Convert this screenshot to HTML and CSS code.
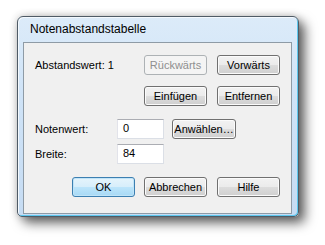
FILE: index.html
```html
<!DOCTYPE html>
<html>
<head>
<meta charset="utf-8">
<link rel="stylesheet" href="styles.css">
</head>
<body>
<div class="window">
  <div class="titlebar">Notenabstandstabelle</div>
  <div class="client">
    <div class="row r1">
      <span class="label lab-wide">Abstandswert: 1</span>
      <button class="btn" disabled>Rückwärts</button>
      <button class="btn gap10">Vorwärts</button>
    </div>
    <div class="row r2">
      <button class="btn">Einfügen</button>
      <button class="btn gap10">Entfernen</button>
    </div>
    <div class="row r3">
      <span class="label lab-narrow">Notenwert:</span>
      <span class="input">0</span>
      <button class="btn btn-sel">Anwählen…</button>
    </div>
    <div class="row r4">
      <span class="label lab-narrow">Breite:</span>
      <span class="input">84</span>
    </div>
    <div class="row r5">
      <button class="btn btn-default">OK</button>
      <button class="btn gap9">Abbrechen</button>
      <button class="btn gap10">Hilfe</button>
    </div>
  </div>
</div>
</body>
</html>
```

FILE: styles.css
```css
html, body {
  margin: 0;
  padding: 0;
  background: #ffffff;
}
body {
  width: 325px;
  height: 245px;
  overflow: hidden;
  font-family: "Liberation Sans", Arial, sans-serif;
  font-size: 11px;
  color: #000;
}
.window {
  box-sizing: border-box;
  margin: 16px 0 0 17px;
  width: 282px;
  height: 201px;
  border: 1px solid #4f5b66;
  border-radius: 6px 6px 5px 5px;
  background: linear-gradient(#dcebf9, #cfe3f7 40%, #c6dcf3);
  box-shadow: inset 1px 1px 0 #f3f9fe, inset -1px -1px 0 #5ec8ee,
    6px 6px 12px rgba(0,0,0,0.6), 0 0 8px rgba(0,0,0,0.2);
  padding: 0 6px 2px 5px;
  display: flex;
  flex-direction: column;
}
.titlebar {
  height: 25px;
  box-sizing: border-box;
  padding: 5px 0 0 7px;
  font-size: 12px;
  line-height: 14px;
  color: #000;
  white-space: nowrap;
}
.client {
  flex: 1;
  border: 1px solid #8e9ba6;
  background: #f0f0f0;
  padding: 12px 0 0 11px;
}
.row {
  display: flex;
  align-items: center;
  height: 20px;
}
.r2 { margin-top: 11px; padding-left: 109px; }
.r3 { margin-top: 13px; }
.r4 { margin-top: 5px; }
.r5 { margin-top: 13px; padding-left: 37px; }
.label { white-space: nowrap; }
.lab-wide { width: 109px; }
.lab-narrow { width: 82px; }
.btn {
  box-sizing: border-box;
  width: 63px;
  height: 20px;
  margin: 0;
  padding: 0;
  font-family: "Liberation Sans", Arial, sans-serif;
  font-size: 11px;
  color: #000;
  border: 1px solid #707070;
  border-radius: 3px;
  background: linear-gradient(#f2f2f2, #ebebeb 50%, #dddddd 50%, #cfcfcf);
  box-shadow: inset 0 0 0 1px #fbfbfb;
  white-space: nowrap;
  line-height: 16px;
}
.btn:disabled {
  color: #8f8f8f;
  border-color: #adb2b5;
  background: #f4f4f4;
  box-shadow: none;
}
.btn-default {
  border-color: #3c7fb1;
  background: linear-gradient(#e5f4fc, #d7eefb 50%, #bde5fb 50%, #a7d9f5);
  box-shadow: inset 0 0 0 1px #c0e4f8;
}
.btn-sel { width: 64px; margin-left: 8px; }
.gap10 { margin-left: 10px; }
.gap9 { margin-left: 9px; }
.input {
  box-sizing: border-box;
  width: 47px;
  height: 20px;
  background: #fff;
  border: 1px solid #dbdfe6;
  border-top-color: #abadb3;
  border-left-color: #e2e3ea;
  padding-left: 5px;
  line-height: 17px;
}
```
